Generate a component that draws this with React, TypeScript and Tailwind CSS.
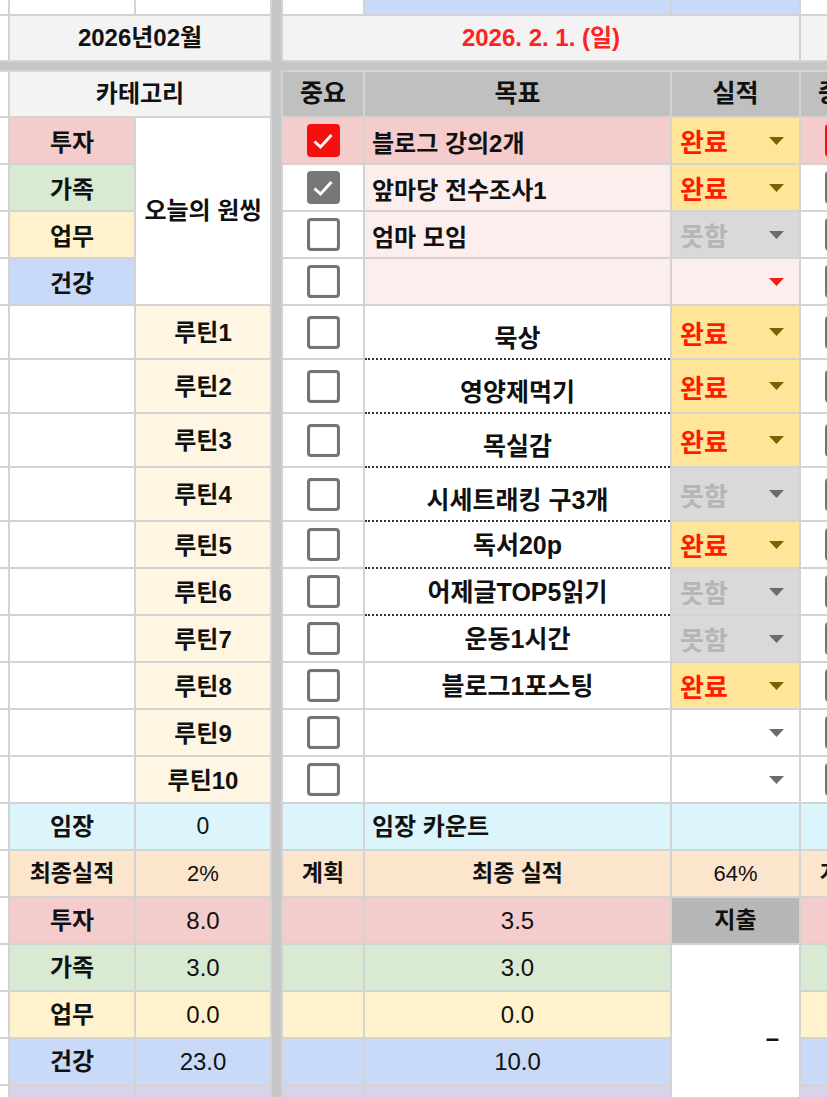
import clsx from "clsx";
import { twMerge } from "tailwind-merge";

type Status = "done" | "fail" | "pink" | "blank";

const font = "font-['Liberation_Sans','Noto_Sans_CJK_KR',sans-serif]";

function Cell({ className, children }: { className?: string; children?: React.ReactNode }) {
  return (
    <div className={twMerge("flex items-center justify-center overflow-hidden whitespace-nowrap", className)}>
      {children}
    </div>
  );
}

function Checkbox({ state = "off" }: { state?: "off" | "red" | "gray" }) {
  if (state === "off") {
    return <div className="size-[33px] shrink-0 rounded-[4px] border-[3px] border-[#747474] bg-white shadow-[inset_0_0_1px_#999]" />;
  }
  return (
    <div
      className={clsx(
        "flex size-[33px] shrink-0 items-center justify-center rounded-[4px]",
        state === "red" ? "bg-[#f50f0f]" : "bg-[#777777]"
      )}
    >
      <svg width="22" height="18" viewBox="0 0 22 18">
        <path d="M2.5 9.5 L8.5 15 L19.5 3" fill="none" stroke="white" strokeWidth="3" />
      </svg>
    </div>
  );
}

function Arrow({ color }: { color: string }) {
  return (
    <svg width="15" height="8" viewBox="0 0 15 8" className="shrink-0">
      <polygon points="0,0 15,0 7.5,8" fill={color} />
    </svg>
  );
}

function StatusCell({ s }: { s: Status }) {
  const styles = {
    done: { bg: "bg-[#ffe599]", text: "완료", tc: "text-[#ff1a00]", arrow: "#7f6000" },
    fail: { bg: "bg-[#d9d9d9]", text: "못함", tc: "text-[#b5b5b5]", arrow: "#6b6b6b" },
    pink: { bg: "bg-[#fdeeee]", text: "", tc: "", arrow: "#ff1a1a" },
    blank: { bg: "bg-white", text: "", tc: "", arrow: "#6b6b6b" },
  }[s];
  return (
    <Cell className={clsx("justify-between pl-[8px] pr-[15px]", styles.bg)}>
      <span className={clsx("pt-[6px] text-[26px] font-bold", styles.tc)}>{styles.text}</span>
      <Arrow color={styles.arrow} />
    </Cell>
  );
}

const goals = [
  { cat: "투자", catBg: "bg-[#f4cccc]", goal: "블로그 강의2개", goalBg: "bg-[#f4cccc]", cb: "red" as const, cbBg: "bg-[#f4cccc]", s: "done" as Status, fCb: "red" as const, fBg: "bg-[#f4cccc]" },
  { cat: "가족", catBg: "bg-[#d9ead3]", goal: "앞마당 전수조사1", goalBg: "bg-[#fdeeee]", cb: "gray" as const, cbBg: "bg-white", s: "done" as Status, fCb: "off" as const, fBg: "bg-white" },
  { cat: "업무", catBg: "bg-[#fff2cc]", goal: "엄마 모임", goalBg: "bg-[#fdeeee]", cb: "off" as const, cbBg: "bg-white", s: "fail" as Status, fCb: "off" as const, fBg: "bg-white" },
  { cat: "건강", catBg: "bg-[#c9daf8]", goal: "", goalBg: "bg-[#fdeeee]", cb: "off" as const, cbBg: "bg-white", s: "pink" as Status, fCb: "off" as const, fBg: "bg-white" },
];

const routines: { name: string; goal: string; s: Status; dotted: boolean; tall: boolean }[] = [
  { name: "루틴1", goal: "묵상", s: "done", dotted: true, tall: true },
  { name: "루틴2", goal: "영양제먹기", s: "done", dotted: true, tall: true },
  { name: "루틴3", goal: "목실감", s: "done", dotted: true, tall: true },
  { name: "루틴4", goal: "시세트래킹 구3개", s: "fail", dotted: true, tall: true },
  { name: "루틴5", goal: "독서20p", s: "done", dotted: true, tall: false },
  { name: "루틴6", goal: "어제글TOP5읽기", s: "fail", dotted: true, tall: false },
  { name: "루틴7", goal: "운동1시간", s: "fail", dotted: false, tall: false },
  { name: "루틴8", goal: "블로그1포스팅", s: "done", dotted: false, tall: false },
  { name: "루틴9", goal: "", s: "blank", dotted: false, tall: false },
  { name: "루틴10", goal: "", s: "blank", dotted: false, tall: false },
];

const totals = [
  { cat: "투자", bg: "bg-[#f4cccc]", plan: "8.0", real: "3.5" },
  { cat: "가족", bg: "bg-[#d9ead3]", plan: "3.0", real: "3.0" },
  { cat: "업무", bg: "bg-[#fff2cc]", plan: "0.0", real: "0.0" },
  { cat: "건강", bg: "bg-[#c9daf8]", plan: "23.0", real: "10.0" },
];

export default function App() {
  return (
    <div className={clsx("h-[1097px] w-[827px] overflow-hidden bg-white text-[#111]", font)}>
      <div className="grid w-[881px] grid-cols-[8px_124px_134px_9px_80px_305px_127px_80px] grid-rows-[14px_44px_8px_44px_45px_45px_45px_45px_52px_52px_52px_52px_45px_45px_45px_45px_45px_45px_45px_45px_45px_45px_45px_45px_45px] gap-[2px] bg-[#d3d3d3]">
        {/* frozen separators */}
        <div className="col-start-4 row-span-full bg-[#c6c6c6]" />
        <div className="col-span-full row-start-3 bg-[#c6c6c6]" />

        {/* top cut row */}
        <Cell className="bg-white" />
        <Cell className="bg-white" />
        <Cell className="bg-white" />
        <Cell className="bg-white" />
        <Cell className="bg-[#c9daf8]" />
        <Cell className="bg-[#c9daf8]" />
        <Cell className="bg-white" />

        {/* month / date */}
        <Cell className="bg-white" />
        <Cell className="col-span-2 bg-[#f3f3f3] text-[24px] font-bold">2026년02월</Cell>
        <Cell className="col-span-3 bg-[#f3f3f3] text-[24px] font-bold text-[#f22]">2026. 2. 1. (일)</Cell>
        <Cell className="bg-[#f3f3f3]" />

        {/* header */}
        <Cell className="bg-white" />
        <Cell className="col-span-2 bg-[#f3f3f3] text-[24px] font-bold">카테고리</Cell>
        <Cell className="bg-[#c0c0c0] text-[25px] font-bold">중요</Cell>
        <Cell className="bg-[#c0c0c0] text-[25px] font-bold">목표</Cell>
        <Cell className="bg-[#c0c0c0] text-[25px] font-bold">실적</Cell>
        <Cell className="bg-[#c0c0c0] text-[25px] font-bold">중요</Cell>

        {/* goals */}
        {goals.map((g, i) => (
          <>
            <Cell key={`a${i}`} className="bg-white" />
            <Cell key={`b${i}`} className={clsx("pt-[4px] text-[24px] font-bold", g.catBg)}>{g.cat}</Cell>
            {i === 0 && (
              <Cell key="one" className="row-span-4 bg-white text-[24px] font-bold">오늘의 원씽</Cell>
            )}
            <Cell key={`c${i}`} className={g.cbBg}><Checkbox state={g.cb} /></Cell>
            <Cell key={`d${i}`} className={clsx("justify-start pl-[7px] pt-[6px] text-[24px] font-bold", g.goalBg)}>{g.goal}</Cell>
            <StatusCell key={`e${i}`} s={g.s} />
            <Cell key={`f${i}`} className={g.fBg}><Checkbox state={g.fCb} /></Cell>
          </>
        ))}

        {/* routines */}
        {routines.map((r, i) => (
          <>
            <Cell key={`ra${i}`} className="bg-white" />
            <Cell key={`rb${i}`} className="bg-white" />
            <Cell key={`rc${i}`} className="bg-[#fef5e2] pt-[2px] text-[24px] font-bold">{r.name}</Cell>
            <Cell key={`rd${i}`} className="bg-white"><Checkbox /></Cell>
            <Cell
              key={`re${i}`}
              className={clsx(
                "bg-white text-[25px] font-bold",
                r.tall ? "pt-[14px]" : "pt-[3px]",
                r.dotted && "-mb-[2px] border-b-2 border-dotted border-[#333]"
              )}
            >
              {r.goal}
            </Cell>
            <StatusCell key={`rf${i}`} s={r.s} />
            <Cell key={`rg${i}`} className="bg-white"><Checkbox /></Cell>
          </>
        ))}

        {/* 임장 */}
        <Cell className="bg-white" />
        <Cell className="bg-[#dcf5fc] text-[24px] font-bold">임장</Cell>
        <Cell className="bg-[#dcf5fc] text-[23px]">0</Cell>
        <Cell className="bg-[#dcf5fc]" />
        <Cell className="justify-start bg-[#dcf5fc] pl-[7px] text-[24px] font-bold">임장 카운트</Cell>
        <Cell className="bg-[#dcf5fc]" />
        <Cell className="bg-[#dcf5fc]" />

        {/* 최종실적 */}
        <Cell className="bg-white" />
        <Cell className="bg-[#fce5cd] text-[23px] font-bold">최종실적</Cell>
        <Cell className="bg-[#fce5cd] text-[22px]">2%</Cell>
        <Cell className="bg-[#fce5cd] text-[23px] font-bold">계획</Cell>
        <Cell className="bg-[#fce5cd] text-[23px] font-bold">최종 실적</Cell>
        <Cell className="bg-[#fce5cd] text-[22px]">64%</Cell>
        <Cell className="bg-[#fce5cd] text-[23px] font-bold">계획</Cell>

        {/* totals */}
        {totals.map((t, i) => (
          <>
            <Cell key={`ta${i}`} className="bg-white" />
            <Cell key={`tb${i}`} className={clsx("text-[24px] font-bold", t.bg)}>{t.cat}</Cell>
            <Cell key={`tc${i}`} className={clsx("text-[24px]", t.bg)}>{t.plan}</Cell>
            <Cell key={`td${i}`} className={t.bg} />
            <Cell key={`te${i}`} className={clsx("text-[24px]", t.bg)}>{t.real}</Cell>
            {i === 0 && (
              <Cell key="spend" className="bg-[#b7b7b7] text-[23px] font-bold">지출</Cell>
            )}
            {i === 1 && (
              <Cell key="spendv" className="row-span-4 justify-end bg-white pr-[20px] text-[24px] font-bold">–</Cell>
            )}
            <Cell key={`tf${i}`} className={t.bg} />
          </>
        ))}

        {/* next row, partly visible */}
        <Cell className="bg-white" />
        <Cell className="bg-[#d9d2e9]" />
        <Cell className="bg-[#d9d2e9]" />
        <Cell className="bg-[#d9d2e9]" />
        <Cell className="bg-[#d9d2e9]" />
        <Cell className="bg-[#d9d2e9]" />
      </div>
    </div>
  );
}
